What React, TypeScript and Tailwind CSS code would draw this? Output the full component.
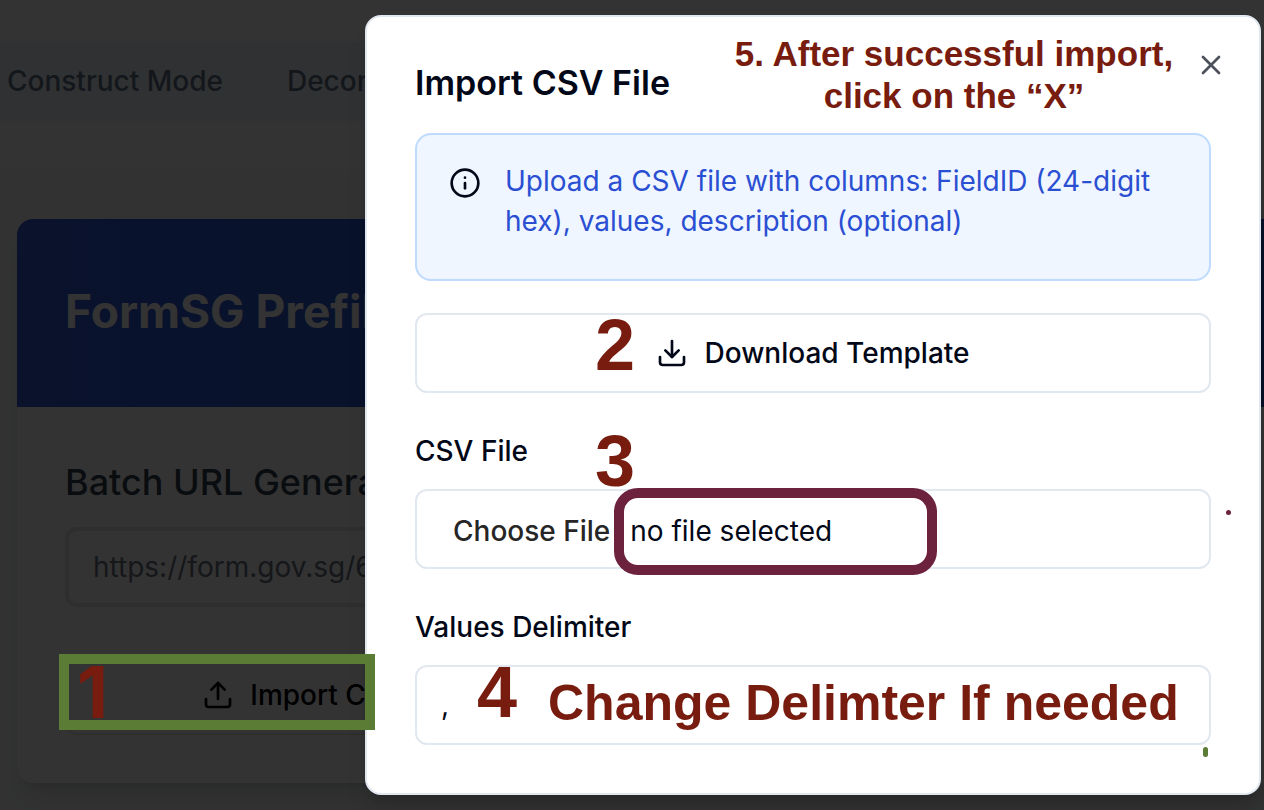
import { Download, Info, Upload, X } from "lucide-react";

function PageBehind() {
  return (
    <div className="min-h-screen bg-slate-50">
      <header className="bg-white pt-[41px] pb-12">
        <nav className="flex h-20 items-center gap-16 bg-slate-100 px-[7px] text-[28px] leading-10 font-medium text-slate-500">
          <button type="button">Construct Mode</button>
          <button type="button">Deconstruct Mode</button>
        </nav>
      </header>
      <main className="pt-[50px] pb-7 pl-[17px]">
        <section className="overflow-hidden rounded-l-2xl bg-white shadow-xl">
          <div className="flex h-[188px] items-center bg-linear-to-r from-[#325cdc] to-[#2850c8] px-12 pb-1">
            <h1 className="text-[46px] leading-[60px] font-bold whitespace-nowrap text-white">FormSG Prefill</h1>
          </div>
          <div className="p-12">
            <h2 className="text-[36px] leading-[54px] font-medium text-gray-700">
              <label htmlFor="form-url">Batch URL Generator</label>
            </h2>
            <input
              id="form-url"
              type="text"
              placeholder="https://form.gov.sg/67890"
              className="mt-[18px] block h-20 w-full rounded-xl border-4 border-gray-200 px-6 text-[28px] leading-10 placeholder:text-gray-500"
            />
            <button
              type="button"
              className="mt-12 flex h-20 w-[476px] items-center justify-center gap-4 rounded-xl border-2 border-gray-200 text-[28px] leading-10 font-medium text-black"
            >
              <Upload className="size-8" />
              Import CSV
            </button>
          </div>
        </section>
      </main>
    </div>
  );
}

function ImportDialog() {
  return (
    <div
      role="dialog"
      aria-modal="true"
      aria-labelledby="dialog-title"
      className="relative flex w-full max-w-4xl flex-col gap-8 rounded-2xl border-2 border-slate-200 bg-white p-12 text-[28px] leading-10 text-[#020817] shadow-xl"
    >
      <h2 id="dialog-title" className="text-[34px] leading-9 font-semibold">
        Import CSV File
      </h2>
      <button type="button" aria-label="Close" className="absolute top-8 right-8 opacity-70">
        <X className="size-8" />
      </button>

      <div role="alert" className="flex gap-6 rounded-2xl border-2 border-blue-200 bg-[#eff6ff] px-8 pt-[26px] pb-[38px]">
        <Info className="mt-[6px] size-8 shrink-0" />
        <p className="text-[#2b4fd2]">
          Upload a CSV file with columns: FieldID (24-digit hex), values, description (optional)
        </p>
      </div>

      <button
        type="button"
        className="flex h-20 items-center justify-center gap-4 rounded-xl border-2 border-slate-200 font-medium"
      >
        <Download className="size-8" />
        Download Template
      </button>

      <div className="flex flex-col gap-3">
        <label htmlFor="csv-file" className="leading-[52px] font-medium">
          CSV File
        </label>
        <label className="flex h-20 items-center rounded-xl border-2 border-slate-200 px-6 pt-1">
          <input id="csv-file" type="file" className="sr-only" />
          <span className="px-3 font-medium text-neutral-800">Choose File</span>
          <span className="ml-2">no file selected</span>
        </label>
      </div>

      <div className="flex flex-col gap-3">
        <label htmlFor="delimiter" className="leading-[52px] font-medium">
          Values Delimiter
        </label>
        <input
          id="delimiter"
          type="text"
          defaultValue=","
          className="h-20 w-full rounded-xl border-2 border-slate-200 px-6"
        />
      </div>

      <div className="pointer-events-none absolute inset-0 font-['Liberation_Sans',Arial,sans-serif] font-bold text-[#771c0e]">
        <p className="absolute top-4 left-[359px] w-[456px] text-center text-[35px] leading-[42px]">
          5. After successful import, click on the “X”
        </p>
        <span className="absolute top-[288px] left-[228px] text-[72px] leading-[80px]">2</span>
        <span className="absolute top-[404px] left-[228px] text-[72px] leading-[80px]">3</span>
        <span className="absolute top-[635px] left-[110px] text-[72px] leading-[80px]">4</span>
        <span className="absolute top-[656px] left-[181px] text-[50px] leading-[60px] whitespace-nowrap">
          Change Delimter If needed
        </span>
        <span className="absolute top-[471px] left-[247px] h-[87px] w-[323px] rounded-3xl border-[10px] border-[#6c213d]" />
        <span className="absolute top-[493px] left-[859px] size-[5px] rounded-full bg-[#6c213d]" />
        <span className="absolute top-[730px] left-[836px] h-[10px] w-[5px] rounded-full bg-[#5b7c35]" />
      </div>
    </div>
  );
}

export default function App() {
  return (
    <div className="relative min-h-screen overflow-hidden font-[Inter,sans-serif]">
      <PageBehind />
      <div className="absolute inset-0 flex items-start justify-end bg-black/80 pt-[15px] pr-[3px]">
        <ImportDialog />
      </div>
      <div className="pointer-events-none absolute top-[654px] left-[59px] flex h-[76px] w-[316px] items-center border-[10px] border-[#5b7c35] px-2 text-[72px] leading-[80px] font-bold text-[#771c0e]">
        1
      </div>
    </div>
  );
}
